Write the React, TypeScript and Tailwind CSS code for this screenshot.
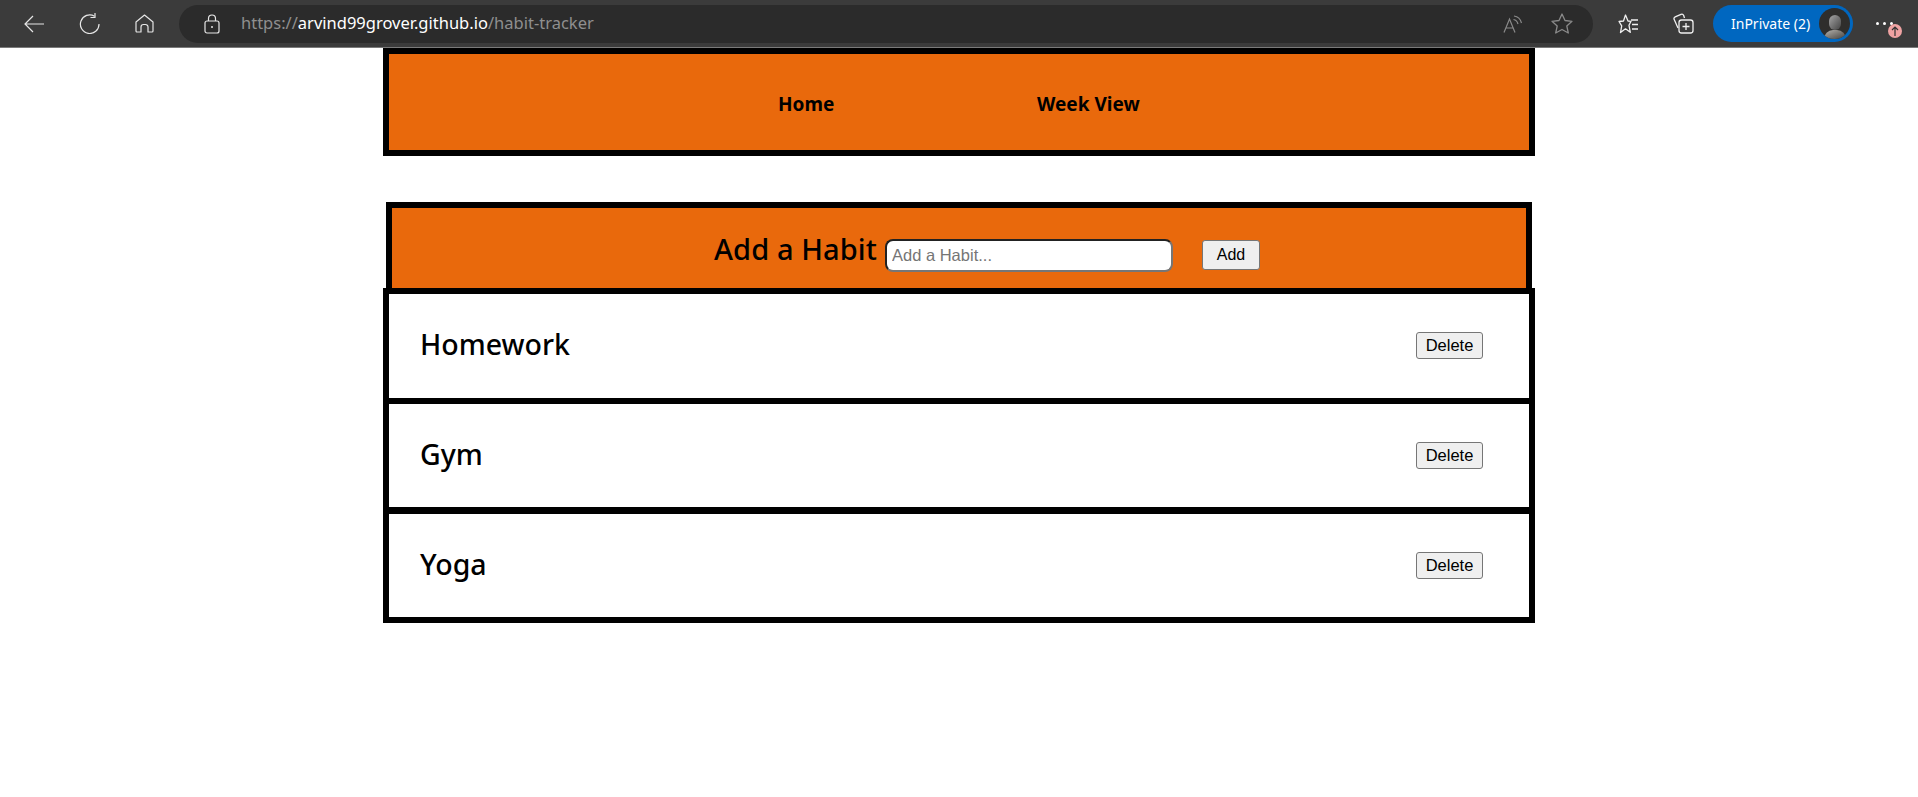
const seg = "font-['Noto_Sans',sans-serif]"

function BrowserBar() {
  return (
    <div className="h-[48px] bg-[#3b3b3b] border-b border-[#7a7a7a] flex items-center text-white">
      <svg className="ml-[24px] w-[20px] h-[18px]" viewBox="0 0 20 18" fill="none" stroke="#e6e6e6" strokeWidth="1.2">
        <path d="M9 1 1 9l8 8M1 9h19" />
      </svg>
      <svg className="ml-[35px] w-[21px] h-[21px]" viewBox="0 0 21 21" fill="none" stroke="#e6e6e6" strokeWidth="1.2">
        <path d="M15.500 3.200A9.300 9.300 0 1 0 20 11" />
        <path d="M16 0v4.500h-4.500" />
      </svg>
      <svg className="ml-[35px] w-[19px] h-[19px]" viewBox="0 0 19 19" fill="none" stroke="#e6e6e6" strokeWidth="1.2" strokeLinejoin="round">
        <path d="M1 8 9.500 1 18 8v9a1 1 0 0 1-1 1h-4v-5a2.500 2.500 0 0 0-2.500-2.500h-2A2.500 2.500 0 0 0 6 13v5H2a1 1 0 0 1-1-1z" />
      </svg>
      <div className="ml-[25px] w-[1414px] h-[38px] rounded-[19px] bg-[#2b2b2b] flex items-center">
        <svg className="ml-[25px] w-[16px] h-[20px]" viewBox="0 0 16 20" fill="none" stroke="#e6e6e6" strokeWidth="1.2">
          <rect x="1" y="7" width="14" height="12" rx="2" />
          <path d="M4.500 7V4.500a3.500 3.500 0 0 1 7 0V7" />
          <circle cx="8" cy="13" r="1" fill="#e6e6e6" stroke="none" />
        </svg>
        <div className={`${seg} ml-[21px] text-[16.5px] text-[#8f8f8f]`}>
          https://<span className="text-white">arvind99grover.github.io</span>/habit-tracker
        </div>
        <svg className="ml-auto w-[20px] h-[18px]" viewBox="0 0 20 18" fill="none" stroke="#8a8a8a" strokeWidth="1.2">
          <path d="M1 17.500 6.500 4 12 17.500M3 13h7" />
          <path d="M11 1c3.500.5 6.500 3 7.500 7M10.500 4.500c2 .4 3.800 2 4.500 4.500" />
        </svg>
        <svg className="ml-[28px] mr-[20px] w-[22px] h-[21px]" viewBox="0 0 22 21" fill="none" stroke="#8a8a8a" strokeWidth="1.3" strokeLinejoin="round">
          <path d="m11 1 3 6.500 7 .8-5.200 4.700 1.500 7L11 16.500 4.700 20l1.500-7L1 8.300 8 7.500z" />
        </svg>
      </div>
      <svg className="ml-[25px] w-[21px] h-[20px]" viewBox="0 0 21 20" fill="none" stroke="#f0f0f0" strokeWidth="1.3" strokeLinejoin="round">
        <path d="M7.500 1 10 7l3 .3-2 4 1.300 7-4.800-3.500-5 3.800 1.200-6.800L1 7.500 5.500 7z" />
        <path d="M13 6h7M14 10.500h6M14 15h6" />
      </svg>
      <svg className="ml-[34px] w-[21px] h-[21px]" viewBox="0 0 21 21" fill="none" stroke="#f0f0f0" strokeWidth="1.3">
        <path d="M5 15 1.200 6.500a2 2 0 0 1 1-2.600L8 1.300a2 2 0 0 1 2.600 1L11.500 5" />
        <rect x="6" y="7" width="14" height="13" rx="2.500" />
        <path d="M13 10v7M9.500 13.500h7" />
      </svg>
      <div className="ml-[19px] w-[140px] h-[37px] rounded-[19px] bg-[#0067c0] flex items-center">
        <span className={`${seg} ml-[18px] text-[14px] text-white`}>InPrivate (2)</span>
        <div className="ml-auto mr-[3px] w-[31px] h-[31px] rounded-full bg-[#2f2e2c] flex flex-col items-center justify-end overflow-hidden">
          <div className="w-[12px] h-[15px] rounded-full bg-gradient-to-br from-[#a8a8a8] to-[#444]" />
          <div className="w-[22px] h-[9px] rounded-t-full bg-gradient-to-br from-[#b8b5b0] to-[#45423f]" />
        </div>
      </div>
      <div className="relative ml-[23px] flex gap-[4px]">
        <div className="w-[3px] h-[3px] rounded-full bg-white" />
        <div className="w-[3px] h-[3px] rounded-full bg-white" />
        <div className="w-[3px] h-[3px] rounded-full bg-white" />
        <div className="absolute left-[12px] top-[2px] w-[14px] h-[14px] rounded-full bg-[#f0a3a3] flex items-center justify-center">
          <svg className="w-[8px] h-[10px]" viewBox="0 0 8 10" fill="none" stroke="#333" strokeWidth="1.2">
            <path d="M1 4 4 1l3 3M4 1v9" />
          </svg>
        </div>
      </div>
    </div>
  )
}

function HabitRow({ name, heightClass }: { name: string; heightClass: string }) {
  return (
    <div className={`${heightClass} flex items-center justify-between pl-[31px] pr-[46px]`}>
      <h2 className={`${seg} -mt-[3px] text-[28.5px] font-medium text-black`}>{name}</h2>
      <button className="w-[67px] h-[27px] bg-[#efefef] border border-[#767676] rounded-[3px] text-[16.5px] font-['Liberation_Sans',sans-serif] text-black">
        Delete
      </button>
    </div>
  )
}

export default function App() {
  return (
    <div className="min-h-[797px] bg-white">
      <BrowserBar />
      <div className="w-[1152px] ml-[383px]">
        <nav className={`${seg} h-[108px] border-[6px] border-black bg-[#e9690c] flex items-center pl-[389px] pt-[4px] text-[19px] font-bold text-black`}>
          <a className="w-[259px]">Home</a>
          <a>Week View</a>
        </nav>
        <div className="mt-[46px] mx-[3px] h-[86px] border-x-[6px] border-t-[6px] border-black bg-[#e9690c] flex items-center pl-[322px]">
          <h2 className={`${seg} w-[171px] mt-[1px] text-[29px] tracking-[0.1px] font-medium text-black`}>Add a Habit</h2>
          <input
            placeholder="Add a Habit..."
            className="mt-[14px] w-[288px] h-[33px] bg-white rounded-[8px] border-2 border-t-[#222] border-l-[#222] border-r-[#767676] border-b-[#767676] px-[5px] text-[16.5px] font-['Liberation_Sans',sans-serif] placeholder:text-[#757575]"
          />
          <button className="ml-[29px] mt-[14px] w-[58px] h-[30px] bg-[#efefef] border border-[#767676] rounded-[3px] text-[16px] font-['Liberation_Sans',sans-serif] text-black">
            Add
          </button>
        </div>
        <div className="border-x-[6px] border-b-[6px] border-black">
          <div className="border-t-[6px] border-black">
            <HabitRow name="Homework" heightClass="h-[104px] pb-[1px]" />
          </div>
          <div className="border-t-[6px] border-black">
            <HabitRow name="Gym" heightClass="h-[103px]" />
          </div>
          <div className="border-t-[7px] border-black">
            <HabitRow name="Yoga" heightClass="h-[103px]" />
          </div>
        </div>
      </div>
    </div>
  )
}
